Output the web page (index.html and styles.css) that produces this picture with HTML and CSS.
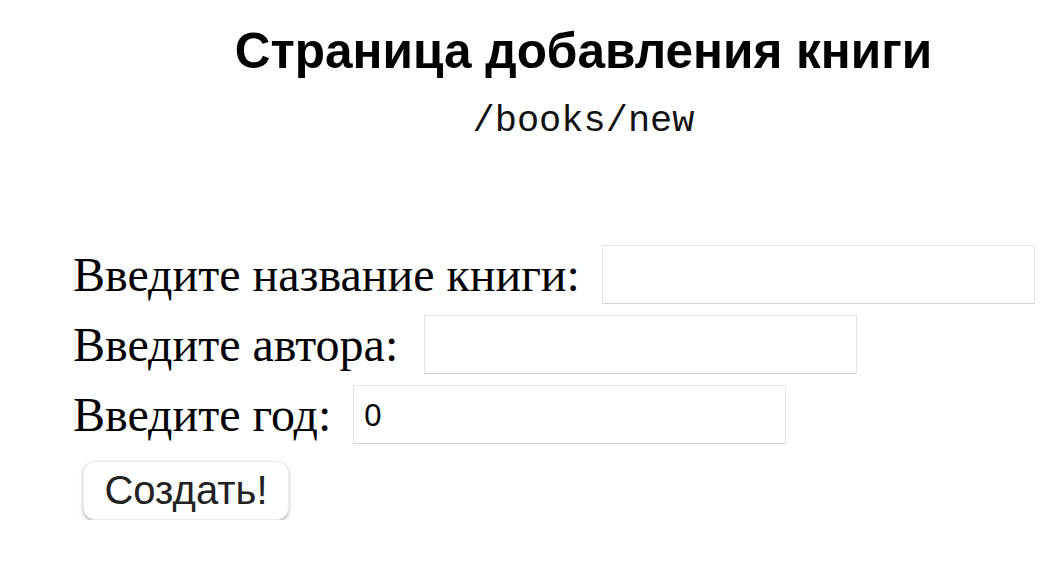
FILE: index.html
```html
<!DOCTYPE html>
<html lang="ru">
<head>
<meta charset="utf-8">
<title>Страница добавления книги</title>
<link rel="stylesheet" href="styles.css">
</head>
<body>
<header class="head">
  <h1 class="title">Страница добавления книги</h1>
  <p class="route">/books/new</p>
</header>
<form class="form">
  <div class="row">
    <label class="label" for="name">Введите название книги:</label>
    <input class="field" id="name" type="text">
  </div>
  <div class="row">
    <label class="label label-author" for="author">Введите автора:</label>
    <input class="field" id="author" type="text">
  </div>
  <div class="row">
    <label class="label" for="year">Введите год:</label>
    <input class="field field-year" id="year" type="text" value="0">
  </div>
  <div class="actions">
    <button class="submit" type="button">Создать!</button>
  </div>
</form>
</body>
</html>
```

FILE: styles.css
```css
html, body {
  margin: 0;
  padding: 0;
  background: #fff;
}

.head {
  display: flex;
  flex-direction: column;
  align-items: center;
  padding-left: 105px;
  padding-top: 24px;
}

.title {
  margin: 0;
  font-family: "Liberation Sans", Arial, sans-serif;
  font-weight: bold;
  font-size: 49.5px;
  line-height: 54px;
  color: #000;
}

.route {
  margin: 23px 0 0;
  font-family: "Liberation Mono", "Courier New", monospace;
  font-size: 37px;
  line-height: 40px;
  color: #111;
}

.form {
  display: flex;
  flex-direction: column;
  padding-left: 73px;
  padding-top: 98px;
}

.row {
  display: flex;
  align-items: center;
  gap: 22px;
  height: 70px;
}

.label {
  font-family: "Liberation Serif", "Times New Roman", serif;
  font-size: 48px;
  color: #000;
}

.label-author {
  margin-right: 4px;
}

.field {
  box-sizing: border-box;
  width: 433px;
  height: 59px;
  margin: 0;
  padding: 4px 10px 0;
  border: 1px solid #e3e3e3;
  border-bottom-color: #cfcfcf;
  border-radius: 0;
  font-family: "Liberation Sans", Arial, sans-serif;
  font-size: 31px;
  color: #000;
  outline: none;
}

.actions {
  display: flex;
  padding: 12px 0 0 10px;
}

.submit {
  width: 206px;
  height: 59px;
  border: 1px solid #ececec;
  border-radius: 12px;
  background: #fff;
  box-shadow: 0 1px 2px rgba(0,0,0,0.22), 0 3px 6px rgba(0,0,0,0.12);
  font-family: "Liberation Sans", Arial, sans-serif;
  font-size: 40px;
  color: #222;
  padding: 0;
}
```
